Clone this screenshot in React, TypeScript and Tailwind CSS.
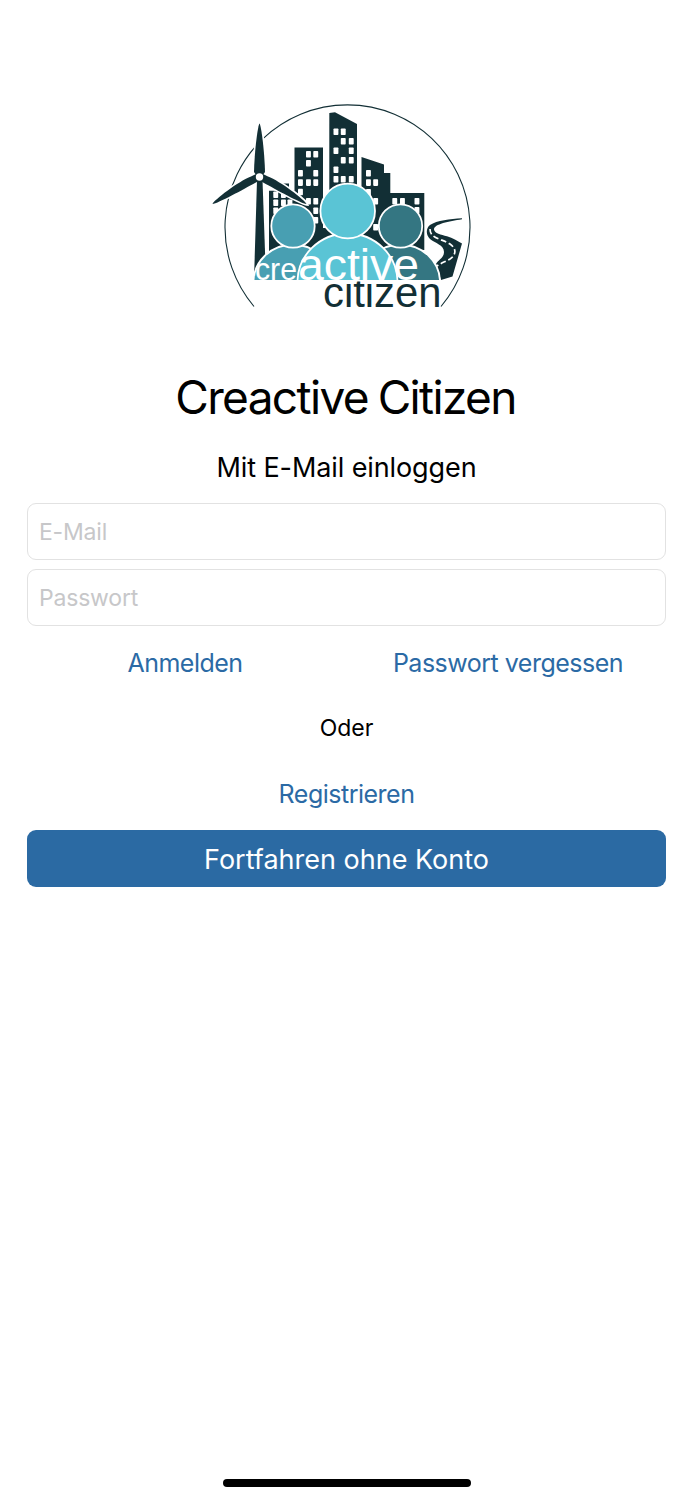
import { useState } from "react";

// window panes of the skyline, as [x, y]
const panes: [number, number][] = [
  [306, 151], [313.3, 151], [306, 160], [298, 170], [313.3, 170], [298, 179.3], [306, 179.3], [313.3, 179.3], [298, 188.7],
  [306, 198], [313.3, 198], [313.3, 207.5], [313.3, 217],
  [333.5, 128.5], [340.8, 128.5], [340.8, 138], [348.8, 138], [333.5, 147.5], [348.8, 147.5], [340.8, 157], [348.8, 157],
  [333.5, 166.5], [333.5, 176], [340.8, 176], [348.8, 176],
  [366, 170], [366, 179.3], [373.2, 179.3], [366, 189],
  [373.2, 198], [392.3, 198], [400, 198], [414.5, 198], [414.5, 207], [414.5, 217], [373.2, 224],
  [273.3, 191.5], [281, 191.5], [273.3, 199.5], [281, 199.5], [287.5, 199.5], [273.3, 207.5],
];

const turbine = [
  "M257 180L262.500 180L266 280H254Z",
  "M259.500 123.500C261 124.500 264.500 150 265 172L259.500 180L254 172C254.500 150 258 124.500 259.500 123.500Z",
  "M212.500 204C214 200 239 181 251 176.500L260 172L262 179L255 183C244 189 218 203.500 212.500 204Z",
  "M306.500 204C305 200 280 181 268 176.500L259 172L257 179L264 183C275 189 301 203.500 306.500 204Z",
];

function Logo() {
  return (
    <svg className="block h-[220px] w-[275px]" viewBox="205 95 275 220" role="img" aria-label="Creactive Citizen">
      <defs>
        <clipPath id="ground">
          <rect x="205" y="95" width="275" height="185" />
        </clipPath>
        <clipPath id="below">
          <rect x="315" y="281.5" width="135" height="30" />
        </clipPath>
      </defs>
      <path d="M254 306.500A122.500 122.500 0 1 1 441 306.500" fill="none" stroke="#122f35" strokeWidth="1.1" />
      <g fill="#122f35">
        <path d="M269 190.800H283V183.500H289V190.800H294.500V147.500H323V260H269Z" />
        <path d="M329.300 113L335 112.300L357 124V245H329.300Z" />
        <path d="M323 228H362V250H323Z" />
        <path d="M361.500 157L384 164.500V173H390.300V193H424.300V250H361.500Z" />
      </g>
      <g fill="#fff">
        {panes.map(([x, y]) => (
          <rect key={`${x}-${y}`} x={x} y={y} width="4.900" height="6.600" rx="0.800" />
        ))}
      </g>
      <g clipPath="url(#ground)">
        <g fill="#fff" stroke="#fff" strokeWidth="3.400">
          {turbine.map((d) => <path key={d} d={d} />)}
        </g>
        <g fill="#122f35">
          {turbine.map((d) => <path key={d} d={d} />)}
        </g>
        <circle cx="259.500" cy="177" r="3.700" fill="#fff" />
        <path d="M462 218.300C450 219 437 220.500 430 225C426 228 425.500 235 430 239C435 243 444 245 444 252C444 258 438 260 436 264L441 280L452.500 276.500L462 243.500C457 241 453 238 447 236.300C441 234.500 434.500 233.500 434 229.500C434 224 449 221.500 462 219.300Z" fill="#122f35" />
        <path d="M430 229C430 239 443 239 450 244C457 249 456 255 450 259C446 261.500 441 263 437 266" fill="none" stroke="#fff" strokeWidth="1.700" strokeDasharray="5.500 2.800" />
        <g stroke="#fff" strokeWidth="1.800">
          <ellipse cx="293" cy="282" rx="39.500" ry="37.500" fill="#489fb2" />
          <ellipse cx="400.500" cy="282" rx="39.500" ry="37.500" fill="#347682" />
          <circle cx="293" cy="226" r="21.700" fill="#489fb2" />
          <circle cx="400.500" cy="226" r="21.700" fill="#347682" />
          <ellipse cx="347.500" cy="282" rx="50" ry="48.500" fill="#5ac4d5" />
          <circle cx="347.700" cy="211" r="27.300" fill="#5ac4d5" />
        </g>
      </g>
      <g fontFamily="'Liberation Sans', sans-serif">
        <text x="255" y="280.300" fontSize="32" textLength="42" lengthAdjust="spacingAndGlyphs" fill="#fff">cre</text>
        <text x="298" y="280.300" fontSize="45" textLength="121" lengthAdjust="spacingAndGlyphs" fill="#fff">active</text>
        <text x="323" y="306.500" fontSize="42" textLength="118.500" lengthAdjust="spacingAndGlyphs" fill="#122f35" clipPath="url(#below)">citizen</text>
      </g>
    </svg>
  );
}

const inputStyle =
  "h-[57px] w-full rounded-[9px] border border-[#e2e2e2] bg-white px-[11px] text-[23px] tracking-[-0.2px] text-black outline-none placeholder:text-[#c7c7c9]";
const linkStyle = "flex h-[57px] items-center justify-center pt-0.5 text-[25px] tracking-[-0.5px] text-[#2b6aa5]";

export default function App() {
  const [email, setEmail] = useState("");
  const [password, setPassword] = useState("");

  return (
    <div className="flex h-[1500px] w-[693px] flex-col items-center bg-white px-[27px] pt-[95px] pb-[13px] font-['Inter',sans-serif] text-black">
      <div className="pr-[8px]">
        <Logo />
      </div>
      <h1 className="mt-[54px] pr-0.5 text-[46px] leading-[56px] tracking-[-1.65px] [word-spacing:-1.5px]">Creactive Citizen</h1>
      <h2 className="mt-[25px] text-[27px] leading-[36px] tracking-[-0.1px]">Mit E-Mail einloggen</h2>

      <form className="mt-[17px] flex w-full flex-col" onSubmit={(e) => e.preventDefault()}>
        <div className="flex flex-col gap-[9px]">
          <input
            type="email"
            className={inputStyle}
            placeholder="E-Mail"
            value={email}
            onChange={(e) => setEmail(e.target.value)}
          />
          <input
            type="password"
            className={inputStyle}
            placeholder="Passwort"
            value={password}
            onChange={(e) => setPassword(e.target.value)}
          />
        </div>
        <div className="mt-2 flex gap-[7px]">
          <button type="submit" className={`${linkStyle} w-[316px]`}>Anmelden</button>
          <button type="button" className={`${linkStyle} flex-1`}>Passwort vergessen</button>
        </div>
        <p className="mt-2 flex h-[57px] items-center justify-center pt-0.5 text-[23px]">Oder</p>
        <button type="button" className={`${linkStyle} mt-[9px]`}>Registrieren</button>
        <button
          type="button"
          className="mt-2 h-[57px] rounded-[9px] bg-[#2b6aa3] pt-[3px] text-[27px] text-white"
        >
          Fortfahren ohne Konto
        </button>
      </form>

      <div className="mt-auto h-2 w-[248px] rounded-full bg-black" />
    </div>
  );
}
